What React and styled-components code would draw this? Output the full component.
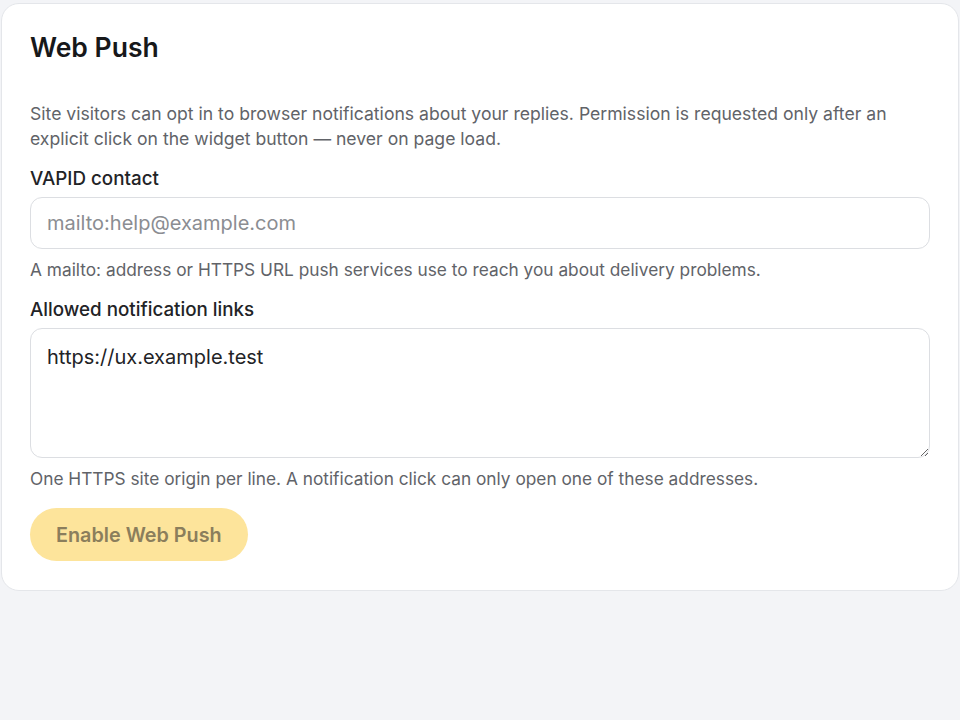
import React from "react";
import styled, { createGlobalStyle } from "styled-components";

const Global = createGlobalStyle`
  html, body { margin: 0; padding: 0; background: #f3f4f7; }
  body { font-family: Inter, "Noto Sans", sans-serif; -webkit-font-smoothing: antialiased; }
  * { box-sizing: border-box; }
`;

const Page = styled.div`
  padding: 3px 1px 0 1px;
`;

const Card = styled.section`
  background: #ffffff;
  border: 1px solid #e4e6ea;
  border-radius: 18px;
  padding: 27px 28px 29px 28px;
  display: flex;
  flex-direction: column;
`;

const Title = styled.h2`
  margin: 0 0 38px 0;
  font-size: 26.5px;
  line-height: 32px;
  font-weight: 600;
  color: #17181a;
`;

const Desc = styled.p`
  margin: 0 0 16px 0;
  font-size: 17.6px;
  line-height: 25px;
  color: #616368;
`;

const Label = styled.label`
  display: block;
  font-size: 18.8px;
  line-height: 24px;
  font-weight: 500;
  color: #222326;
  margin-bottom: 6px;
`;

const fieldBase = `
  width: 100%;
  border: 1px solid #dcdee2;
  border-radius: 12px;
  background: #fff;
  font-family: Inter, "Noto Sans", sans-serif;
  font-size: 20px;
  color: #222326;
  padding: 0 16px;
  outline: none;
`;

const Input = styled.input`
  ${fieldBase}
  height: 52px;
  &::placeholder { color: #8b8d92; }
`;

const TextArea = styled.textarea`
  ${fieldBase}
  height: 130px;
  padding: 14px 16px;
  line-height: 28px;
  resize: vertical;
  display: block;
`;

const Help = styled.div`
  font-size: 17.3px;
  line-height: 24px;
  color: #616368;
  margin: 9px 0 16px 0;
`;

const Button = styled.button`
  align-self: flex-start;
  margin-top: 1px;
  height: 53px;
  padding: 0 26px;
  border: none;
  border-radius: 999px;
  background: #fde49b;
  color: #8b7e5c;
  font-family: Inter, "Noto Sans", sans-serif;
  font-size: 19.8px;
  font-weight: 600;
  cursor: not-allowed;
`;

export default function App() {
  return (
    <>
      <Global />
      <Page>
        <Card>
          <Title>Web Push</Title>
          <Desc>
            Site visitors can opt in to browser notifications about your replies. Permission is requested only after an
            explicit click on the widget button — never on page load.
          </Desc>
          <Label htmlFor="vapid">VAPID contact</Label>
          <Input id="vapid" placeholder="mailto:help@example.com" />
          <Help>A mailto: address or HTTPS URL push services use to reach you about delivery problems.</Help>
          <Label htmlFor="links">Allowed notification links</Label>
          <TextArea id="links" defaultValue="https://ux.example.test" />
          <Help>One HTTPS site origin per line. A notification click can only open one of these addresses.</Help>
          <Button disabled>Enable Web Push</Button>
        </Card>
      </Page>
    </>
  );
}
